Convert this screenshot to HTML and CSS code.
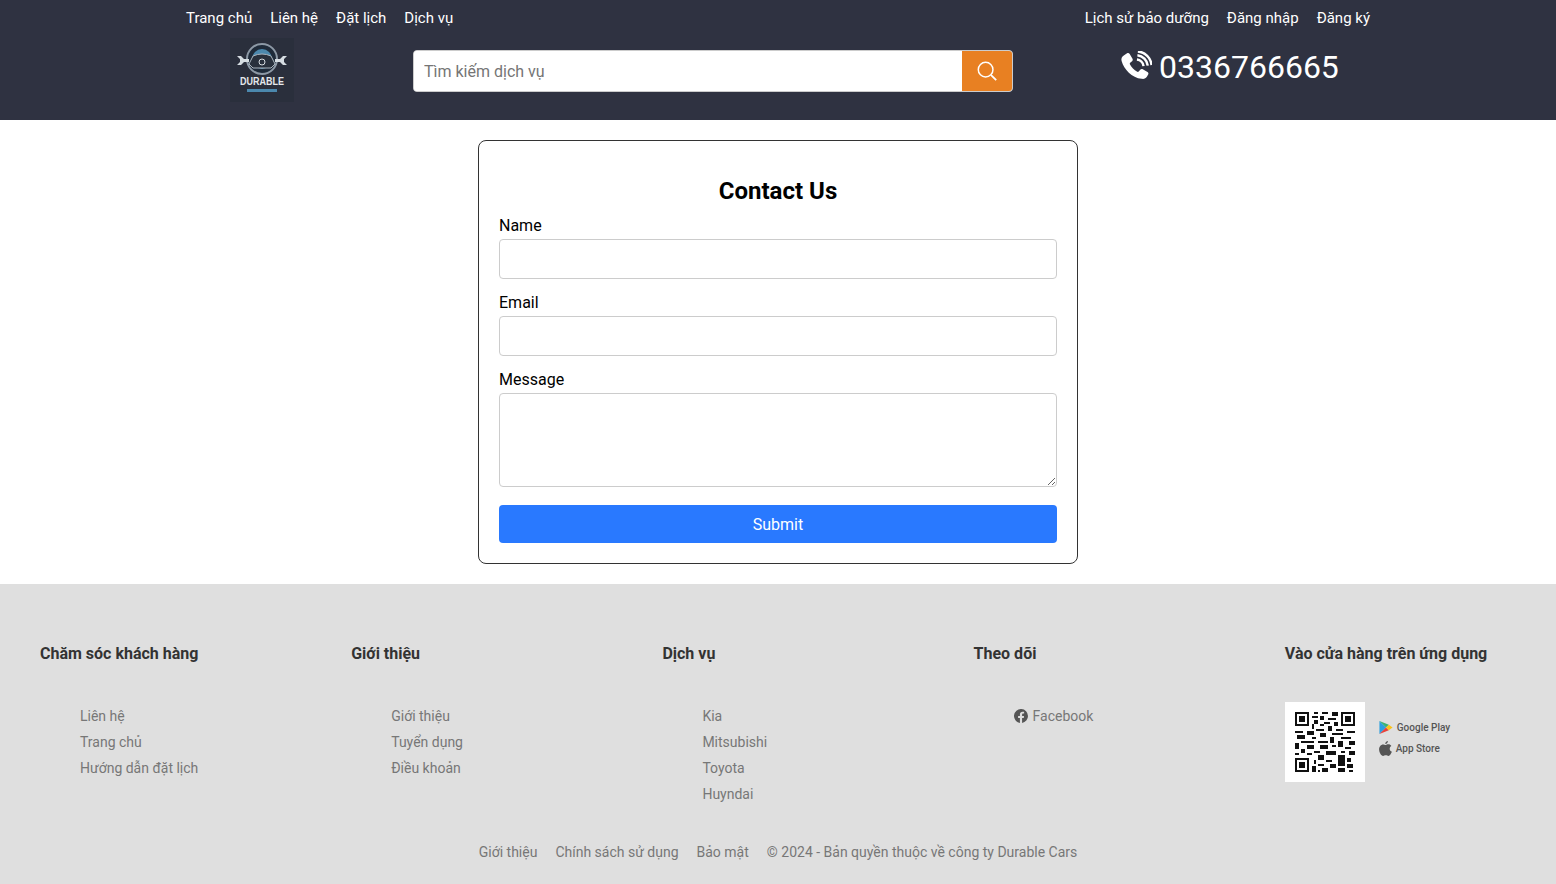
FILE: index.html
```html
<!DOCTYPE html>
<html lang="en">
<head>
    <meta charset="UTF-8">
    <meta name="viewport" content="width=device-width, initial-scale=1.0">
    <title>Contact Us</title>
    <link rel="stylesheet" href="styles.css">
</head>
<body>
    <header class="site-header">
        <div class="header-top">
            <nav class="top-nav">
                <a href="#">Trang chủ</a>
                <a href="#">Liên hệ</a>
                <a href="#">Đặt lịch</a>
                <a href="#">Dịch vụ</a>
            </nav>
            <nav class="top-nav">
                <a href="#">Lịch sử bảo dưỡng</a>
                <a href="#">Đăng nhập</a>
                <a href="#">Đăng ký</a>
            </nav>
        </div>
        <div class="header-main">
            <div class="logo-box">
                <svg class="logo" viewBox="0 0 64 64" aria-label="Durable">
                    <rect width="64" height="64" fill="#2a2f3c"/>
                    <circle cx="32" cy="21" r="15" fill="#1f2b3a" stroke="#8d99a6" stroke-width="2"/>
                    <circle cx="32" cy="21" r="10" fill="#4b88ad"/>
                    <path d="M19 26l4-8q9-4 18 0l4 8-4 4H23z" fill="#28303c" stroke="#aab4bd"/>
                    <circle cx="32" cy="24" r="3" fill="none" stroke="#d5dbe0"/>
                    <path d="M7 18h4l3 3h5v3h-5l-3 3H7l3-3v-3z M57 18h-4l-3 3h-5v3h5l3 3h4l-3-3v-3z" fill="#d6dde2"/>
                    <text x="32" y="47" class="logo-text" textLength="44" lengthAdjust="spacingAndGlyphs">DURABLE</text>
                    <rect x="17" y="51" width="30" height="3" fill="#4b88ad"/>
                </svg>
            </div>
            <form class="search">
                <input class="search-input" type="text" placeholder="Tìm kiếm dịch vụ">
                <button class="search-btn" type="button" aria-label="Tìm kiếm">
                    <svg viewBox="0 0 24 24" width="22" height="22" fill="none" stroke="#fff" stroke-width="1.6">
                        <circle cx="10.5" cy="10.5" r="8"/>
                        <path d="M16.5 16.5L22 22" stroke-width="2"/>
                    </svg>
                </button>
            </form>
            <div class="hotline">
                <svg class="phone-icon" viewBox="0 0 34 34" fill="#fff">
                    <path d="M7.5 2.5c1-.6 2.2-.3 2.8.7l3 5c.5.9.3 2-.5 2.7l-2 1.6c-.5.4-.6 1-.3 1.6 1.8 3.500 4.300 6.100 7.800 8 .5.300 1.200.200 1.600-.300l1.600-2c.7-.8 1.800-1 2.700-.5l5 3c1 .6 1.300 1.800.7 2.800l-1.200 2c-1.200 2-3.500 3-5.700 2.400C12.500 28.700 4.300 19.500 1.700 10.600 1 8.300 2 6 4 4.800z"/>
                    <path d="M18 9a8 8 0 0 1 7 7M18.500 4.500A12.500 12.500 0 0 1 29.500 15.500M19 .5A16 16 0 0 1 33.500 15" fill="none" stroke="#fff" stroke-width="2.600"/>
                </svg>
                <span>0336766665</span>
            </div>
        </div>
    </header>

    <main class="content">
        <form class="contact-card">
            <h2>Contact Us</h2>
            <label for="name">Name</label>
            <input id="name" type="text">
            <label for="email">Email</label>
            <input id="email" type="email">
            <label for="message">Message</label>
            <textarea id="message"></textarea>
            <button class="submit-btn" type="button">Submit</button>
        </form>
    </main>

    <footer class="site-footer">
        <div class="footer-cols">
            <div class="footer-col">
                <h3>Chăm sóc khách hàng</h3>
                <ul>
                    <li><a href="#">Liên hệ</a></li>
                    <li><a href="#">Trang chủ</a></li>
                    <li><a href="#">Hướng dẫn đặt lịch</a></li>
                </ul>
            </div>
            <div class="footer-col">
                <h3>Giới thiệu</h3>
                <ul>
                    <li><a href="#">Giới thiệu</a></li>
                    <li><a href="#">Tuyển dụng</a></li>
                    <li><a href="#">Điều khoản</a></li>
                </ul>
            </div>
            <div class="footer-col">
                <h3>Dịch vụ</h3>
                <ul>
                    <li><a href="#">Kia</a></li>
                    <li><a href="#">Mitsubishi</a></li>
                    <li><a href="#">Toyota</a></li>
                    <li><a href="#">Huyndai</a></li>
                </ul>
            </div>
            <div class="footer-col">
                <h3>Theo dõi</h3>
                <ul>
                    <li>
                        <a class="fb-link" href="#">
                            <svg viewBox="0 0 16 16" width="14" height="14" fill="#555">
                                <path d="M16 8a8 8 0 1 0-9.250 7.900v-5.600H4.700V8h2.050V6.240c0-2 1.200-3.120 3.020-3.120.88 0 1.800.160 1.800.160v1.970h-1c-1 0-1.300.620-1.300 1.250V8h2.220l-.350 2.300H9.250v5.600A8 8 0 0 0 16 8z"/>
                            </svg>
                            Facebook
                        </a>
                    </li>
                </ul>
            </div>
            <div class="footer-col">
                <h3>Vào cửa hàng trên ứng dụng</h3>
                <div class="app-row">
                    <div class="qr">
                        <svg viewBox="0 0 29 29" width="60" height="60" shape-rendering="crispEdges">
                            <path fill="#111" d="M0 0h7v7H0zM22 0h7v7h-7zM0 22h7v7H0z"/>
                            <path fill="#fff" d="M1 1h5v5H1zM23 1h5v5h-5zM1 23h5v5H1z"/>
                            <path fill="#111" d="M2 2h3v3H2zM24 2h3v3h-3zM2 24h3v3H2z"/>
                            <path fill="#111" d="M9 0h2v1H9zM13 0h3v1h-3zM18 0h3v2h-3zM8 2h3v1H8zM12 2h2v2h-2zM16 3h4v1h-4zM9 4h2v2H9zM14 5h3v1h-3zM19 5h2v2h-2zM8 6h1v2H8zM12 6h2v1h-2zM16 7h2v2h-2zM10 8h4v1h-4zM20 8h3v1h-3zM0 9h4v1H0zM6 9h3v2H6zM25 9h4v1h-4zM12 10h3v2h-3zM18 10h5v1h-5zM1 11h4v2H1zM8 12h2v1H8zM17 12h2v3h-2zM22 12h5v1h-5zM3 14h6v1H3zM11 14h5v1h-5zM21 14h2v3h-2zM26 14h3v2h-3zM0 15h2v3H0zM6 16h3v2H6zM12 16h4v2h-4zM18 16h2v1h-2zM24 17h3v1h-3zM3 18h2v2H3zM9 19h3v1H9zM15 19h5v2h-5zM22 19h2v1h-2zM26 19h3v2h-3zM0 20h2v1H0zM6 20h2v1H6zM11 21h3v2h-3zM21 21h3v5h-3zM9 23h1v2H9zM15 23h3v1h-3zM25 22h2v2h-2zM11 25h3v1h-3zM17 25h3v2h-3zM25 25h3v2h-3zM8 26h2v3H8zM13 27h3v2h-3zM21 27h3v2h-3zM11 28h1v1h-1zM26 28h2v1h-2z"/>
                        </svg>
                    </div>
                    <div class="stores">
                        <div class="store store-play">
                            <svg viewBox="0 0 14 16" width="14" height="15">
                                <path d="M0 1v14l7-7z" fill="#2b9fe0"/>
                                <path d="M0 1l7 7 3-3z" fill="#3bb273"/>
                                <path d="M0 15l7-7 3 3z" fill="#e8413a"/>
                                <path d="M10 5l4 3-4 3-3-3z" fill="#f9c21a"/>
                            </svg>
                            <span>Google Play</span>
                        </div>
                        <div class="store">
                            <svg viewBox="0 0 14 16" width="13" height="15" fill="#555">
                                <path d="M9.600 0c.100 1.700-1.300 3.200-2.800 3.100C6.600 1.500 8.100.1 9.600 0zM7 4.300c.700 0 1.800-.8 3.200-.8 1.200 0 2.400.6 3.100 1.700-2.600 1.500-2.200 5.200.600 6.300-.700 1.800-2.200 4.500-3.700 4.500-1.100 0-1.500-.7-2.900-.7s-1.900.7-2.900.7C2.400 16 .1 12.200.1 9.100c0-3.200 2-5.500 4.300-5.500 1.100 0 2 .7 2.600.7z"/>
                            </svg>
                            <span>App Store</span>
                        </div>
                    </div>
                </div>
            </div>
        </div>
        <div class="footer-bottom">
            <a href="#">Giới thiệu</a>
            <a href="#">Chính sách sử dụng</a>
            <a href="#">Bảo mật</a>
            <span>© 2024 - Bản quyền thuộc về công ty Durable Cars</span>
        </div>
    </footer>
</body>
</html>
```

FILE: styles.css
```css
* {
    box-sizing: border-box;
}

body {
    margin: 0;
    font-family: Roboto, "Liberation Sans", sans-serif;
    color: #000;
    background: #fff;
}

a {
    color: inherit;
    text-decoration: none;
}

.site-header {
    height: 120px;
    background: #2f3241;
    color: #fff;
}

.header-top {
    display: flex;
    justify-content: space-between;
    padding: 9px 186px 0;
    height: 38px;
}

.top-nav {
    display: flex;
    gap: 18px;
    font-size: 15px;
    line-height: 18px;
}

.header-main {
    display: flex;
    align-items: flex-start;
}

.logo-box {
    width: 413px;
    padding-left: 230px;
}

.logo {
    display: block;
    width: 64px;
    height: 64px;
}

.logo-text {
    font-family: "Liberation Sans", sans-serif;
    font-size: 11px;
    font-weight: 700;
    fill: #e4e8ec;
    text-anchor: middle;
}

.search {
    display: flex;
    width: 600px;
    height: 42px;
    margin-top: 12px;
    border: 1px solid #ccc;
    border-radius: 4px;
    overflow: hidden;
    background: #fff;
}

.search-input {
    flex: 1;
    border: 0;
    outline: 0;
    padding: 0 10px;
    font: 16px Roboto, sans-serif;
}

.search-input::placeholder {
    color: #757575;
}

.search-btn {
    width: 50px;
    border: 0;
    padding: 0;
    background: #e88022;
    display: flex;
    align-items: center;
    justify-content: center;
}

.hotline {
    display: flex;
    align-items: center;
    gap: 7px;
    margin: 10px 0 0 107px;
    font-size: 32px;
    line-height: 38px;
}

.phone-icon {
    width: 32px;
    height: 32px;
}

.content {
    padding: 20px 0;
}

.contact-card {
    width: 600px;
    height: 424px;
    margin: 0 auto;
    padding: 20px;
    border: 1px solid #333;
    border-radius: 8px;
    display: flex;
    flex-direction: column;
}

.contact-card h2 {
    margin: 15px 0 10px;
    font-size: 24px;
    line-height: 30px;
    text-align: center;
}

.contact-card label {
    font-size: 16px;
    line-height: 19px;
    margin-bottom: 4px;
}

.contact-card input,
.contact-card textarea {
    display: block;
    width: 100%;
    height: 40px;
    margin-bottom: 14px;
    border: 1px solid #ccc;
    border-radius: 4px;
    font: 16px Roboto, sans-serif;
}

.contact-card textarea {
    height: 95px;
    margin-bottom: 18px;
}

.submit-btn {
    height: 38px;
    border: 0;
    border-radius: 4px;
    background: #2979ff;
    color: #fff;
    font: 16px Roboto, sans-serif;
}

.site-footer {
    height: 300px;
    background: #dfdfdf;
    padding-top: 60px;
}

.footer-cols {
    display: grid;
    grid-template-columns: repeat(5, 1fr);
    height: 199px;
}

.footer-col {
    padding-left: 40px;
}

.footer-col h3 {
    margin: 0 0 40px;
    font-size: 16px;
    line-height: 19px;
    font-weight: 700;
    color: #333;
    white-space: nowrap;
}

.footer-col ul {
    margin: 0;
    padding: 0 0 0 40px;
    list-style: none;
    font-size: 14px;
    line-height: 26px;
    color: #777;
}

.fb-link {
    display: flex;
    align-items: center;
    gap: 5px;
}

.app-row {
    display: flex;
    gap: 14px;
    margin-top: -1px;
}

.qr {
    width: 80px;
    height: 80px;
    padding: 10px;
    background: #fff;
}

.qr svg {
    display: block;
}

.stores {
    padding-top: 18px;
    display: flex;
    flex-direction: column;
    gap: 6px;
}

.store {
    display: flex;
    align-items: center;
    gap: 4px;
    font-size: 10px;
    line-height: 15px;
    font-weight: 500;
    color: #555;
}

.footer-bottom {
    display: flex;
    justify-content: center;
    gap: 18px;
    font-size: 14px;
    line-height: 18px;
    color: #777;
}
```
